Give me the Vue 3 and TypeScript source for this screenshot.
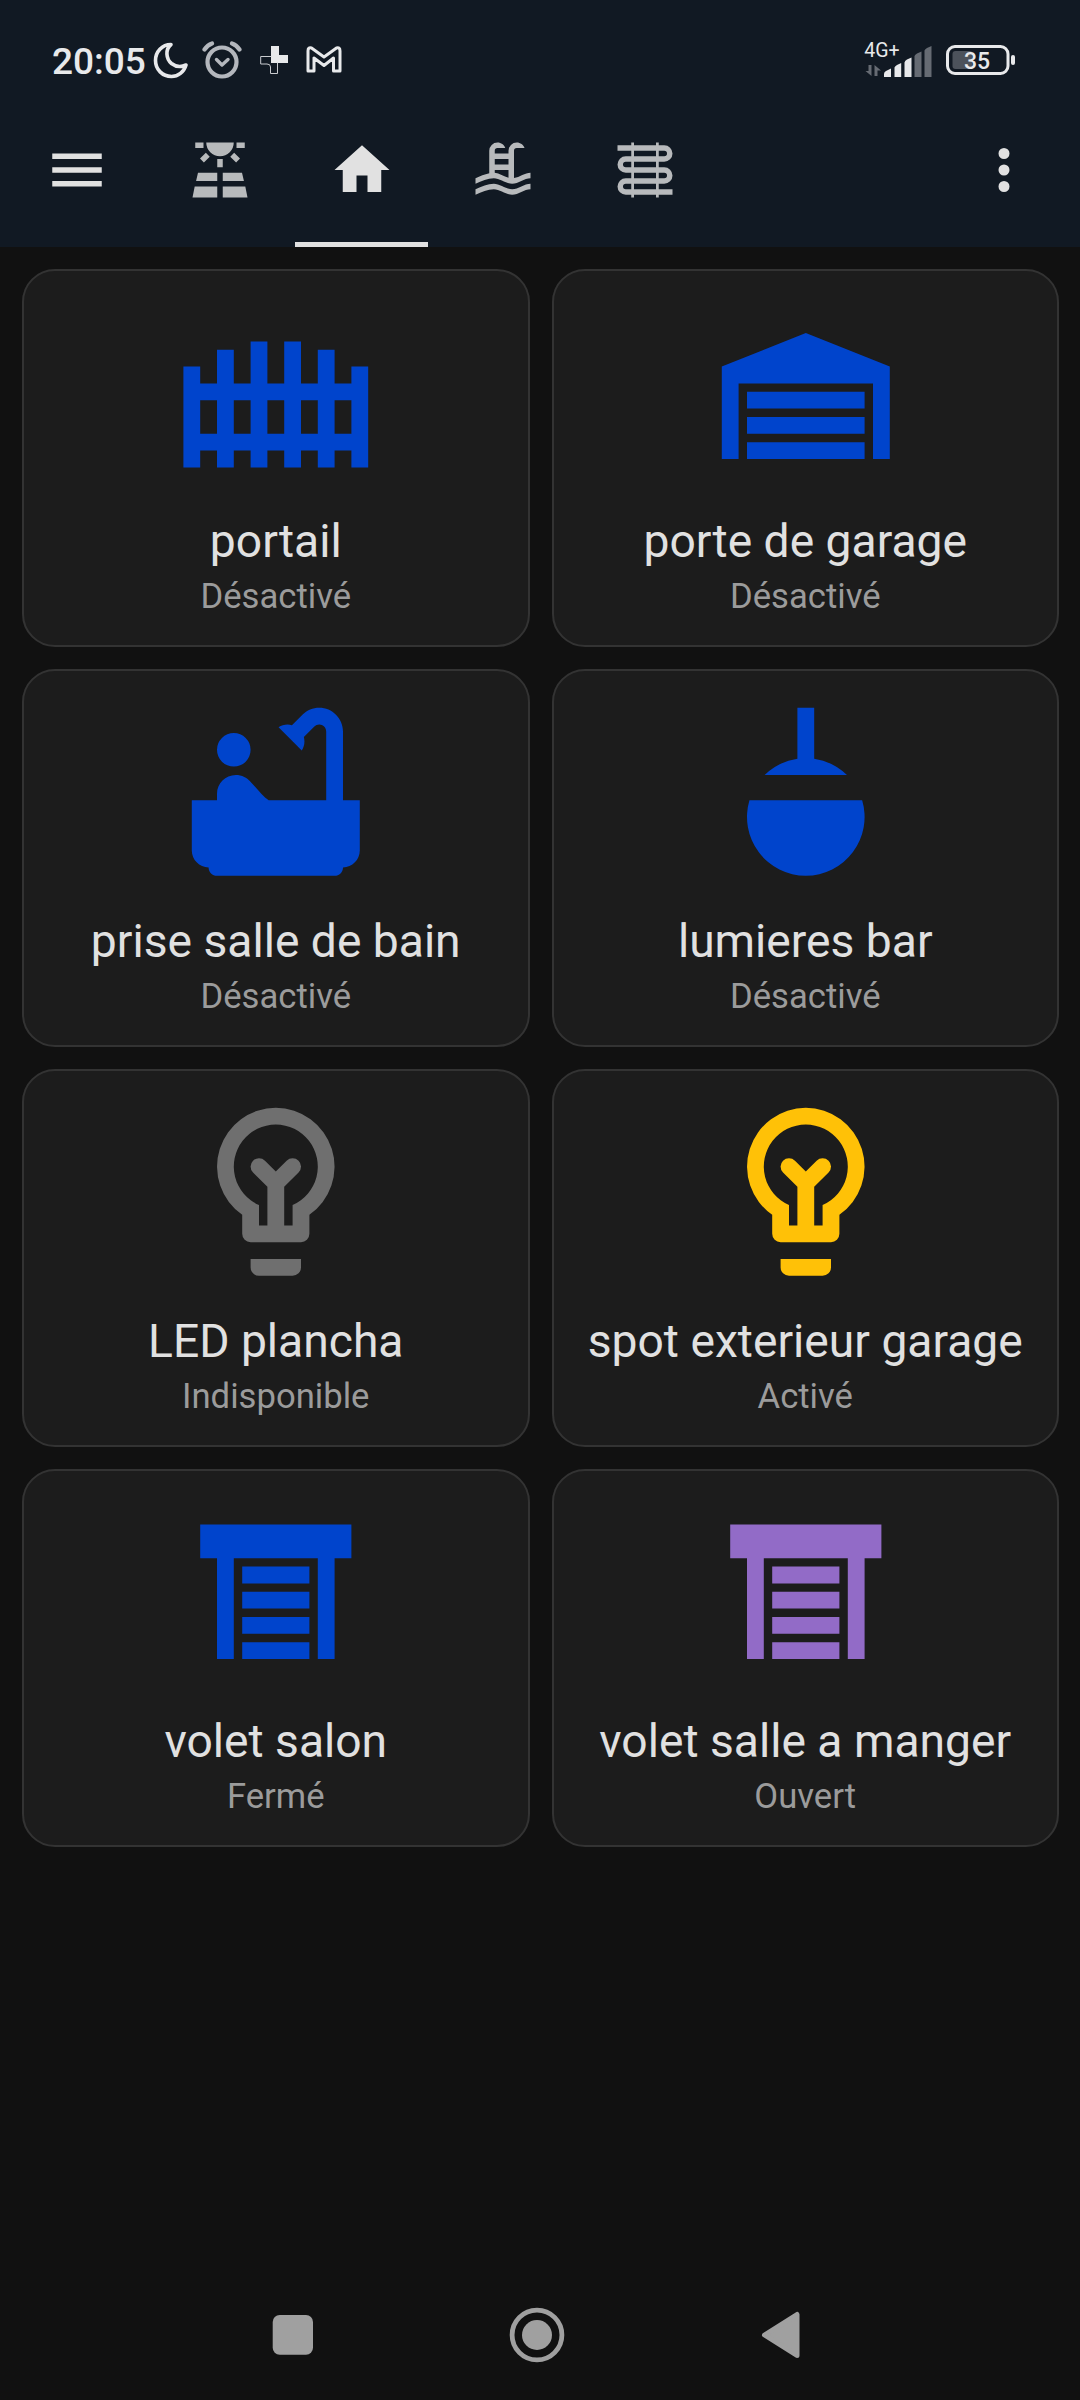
<script setup lang="ts">
interface Tile {
  name: string
  state: string
  icon: keyof typeof glyphs
  color: string
}

interface Tab {
  id: string
  icon: keyof typeof glyphs
  active?: boolean
}

const glyphs = {
  menu: 'M3 6H21V8H3ZM3 11H21V13H3ZM3 16H21V18H3Z',
  dots: 'M12 4A2 2 0 0 1 12 8A2 2 0 0 1 12 4M12 10A2 2 0 0 1 12 14A2 2 0 0 1 12 10M12 16A2 2 0 0 1 12 20A2 2 0 0 1 12 16Z',
  solar:
    'M3 2H6V4H3ZM18 2H21V4H18ZM7 2H17A5 5 0 0 1 7 2ZM11 8H13V11H11ZM6.85 5.74L8.27 7.15L6.14 9.28L4.73 7.86ZM17.15 5.74L15.73 7.15L17.86 9.28L19.27 7.86ZM4 13H11V16H3.3ZM13 13H20L20.7 16H13ZM2.8 18H11V22H2ZM13 18H21.2L22 22H13Z',
  home: 'M10 20V14H14V20H19V12H22L12 3L2 12H5V20H10Z',
  pool: 'M2 15C3.67 14.25 5.33 13.5 7 13.17V5A3 3 0 0 1 10 2C11.31 2 12.42 2.83 12.83 4H10A1 1 0 0 0 9 5V6H14V5A3 3 0 0 1 17 2C18.31 2 19.42 2.83 19.83 4H17A1 1 0 0 0 16 5V14.94C18 14.62 20 13 22 13V15C19.78 15 17.56 17 15.33 17C13.11 17 10.89 15 8.67 15C6.44 15 4.22 16 2 17V15M14 8H9V10H14V8M14 12H9V13C10.67 13.16 12.33 14.31 14 14.79V12M2 19C4.22 18 6.44 17 8.67 17C10.89 17 13.11 19 15.33 19C17.56 19 19.78 17 22 17V19C19.78 19 17.56 21 15.33 21C13.11 21 10.89 19 8.67 19C6.44 19 4.22 20 2 21V19Z',
  coil: 'M7 2H8V22H7ZM16 2H17V22H16ZM2 3H19A3 3 0 0 1 19 9H5A1 1 0 0 0 5 11H19A3 3 0 0 1 19 17H5A1 1 0 0 0 5 19H22V21H5A3 3 0 0 1 5 15H19A1 1 0 0 0 19 13H5A3 3 0 0 1 5 7H19A1 1 0 0 0 19 5H2Z',
  gate: 'M9 6H11V11H13V6H15V11H17V7H19V11H21V9H23V21H21V19H19V21H17V19H15V21H13V19H11V21H9V19H7V21H5V19H3V21H1V9H3V11H5V7H7V11H9ZM3 13V17H5V13ZM7 13V17H9V13ZM11 13V17H13V13ZM15 13V17H17V13ZM19 13V17H21V13Z',
  garage:
    'M22 9V20H20V11H4V20H2V9L12 5L22 9M19 12H5V14H19V12M19 18H5V20H19V18M19 15H5V17H19V15Z',
  bath: 'M7 5A2 2 0 0 1 7 9A2 2 0 0 1 7 5ZM20 13V4.83C20 3.27 18.73 2 17.17 2c-.75 0-1.47.3-2 .83l-1.25 1.25c-.16-.05-.33-.08-.51-.08-.4 0-.77.12-1.08.32l2.76 2.76c.2-.31.32-.68.32-1.08 0-.18-.03-.34-.07-.51l1.25-1.25c.15-.15.36-.24.58-.24.46 0 .83.37.83.83V13h-6.85c-.3-.21-.57-.45-.82-.72l-1.4-1.55c-.19-.21-.43-.38-.69-.5-.31-.15-.65-.23-1-.23C6 10.01 5 11.01 5 12.25V13H2v6c0 1.1.9 2 2 2 0 .55.45 1 1 1h14c.55 0 1-.45 1-1 1.1 0 2-.9 2-2v-6h-2z',
  lamp: 'M11 2H13V8.07A7 7 0 0 1 16.9 10H7.1A7 7 0 0 1 11 8.07ZM5.29 13H18.71A7 7 0 1 1 5.29 13Z',
  bulb: 'M12 2A7 7 0 0 0 8 14.74V17A1 1 0 0 0 9 18H15A1 1 0 0 0 16 17V14.74A7 7 0 0 0 12 2M14 13.58V16H13V11.41L14.71 9.71A1 1 0 0 0 13.29 8.29L12 9.59L10.71 8.29A1 1 0 0 0 9.29 9.71L11 11.41V16H10V13.58A5 5 0 1 1 14 13.58M9 20H15V21A1 1 0 0 1 14 22H10A1 1 0 0 1 9 21Z',
  shutter:
    'M3 4H21V8H19V20H17V8H7V20H5V8H3V4M8 9H16V11H8V9M8 12H16V14H8V12M8 15H16V17H8V15M8 18H16V20H8V18Z',
}

const tabs: Tab[] = [
  { id: 'solaire', icon: 'solar' },
  { id: 'maison', icon: 'home', active: true },
  { id: 'piscine', icon: 'pool' },
  { id: 'chauffage', icon: 'coil' },
]

const blue = '#0044cc'
const tiles: Tile[] = [
  { name: 'portail', state: 'Désactivé', icon: 'gate', color: blue },
  { name: 'porte de garage', state: 'Désactivé', icon: 'garage', color: blue },
  { name: 'prise salle de bain', state: 'Désactivé', icon: 'bath', color: blue },
  { name: 'lumieres bar', state: 'Désactivé', icon: 'lamp', color: blue },
  { name: 'LED plancha', state: 'Indisponible', icon: 'bulb', color: '#6f6f6f' },
  { name: 'spot exterieur garage', state: 'Activé', icon: 'bulb', color: '#ffc107' },
  { name: 'volet salon', state: 'Fermé', icon: 'shutter', color: blue },
  { name: 'volet salle a manger', state: 'Ouvert', icon: 'shutter', color: '#926bc7' },
]
</script>

<template>
  <div class="screen">
    <div class="status">
      <span class="clock">20:05</span>
      <svg class="moon" width="36" height="38" viewBox="0 0 36 38">
        <path d="M18 3.500C12 8.500 13 18 18.500 22.500C23 26 28.500 26 33 24C31 31 25 35.500 18.500 35.500C9.500 35.500 2.500 28.500 2.500 19.500C2.500 11 9 3.500 18 3.500Z" />
      </svg>
      <svg class="alarm" width="40" height="38" viewBox="0 0 40 38">
        <circle cx="20" cy="21" r="14.500" />
        <path d="M2.500 8.500Q5.500 4 10 2.500M37.500 8.500Q34.500 4 30 2.500" />
        <path class="hand" d="M14.500 18.500L20 24L26 18.500" />
      </svg>
      <svg class="cross" width="29" height="30" viewBox="0 0 29 30">
        <path class="full" d="M11 1H19V10H28V18H11Z" />
        <path class="line" d="M11 11.500H0.700V19H7Q10.500 19 10.500 22V28.500H17.500V18" />
      </svg>
      <svg class="mail" width="36" height="30" viewBox="0 0 36 30">
        <path d="M2 26V6Q2 2 5.500 3L18 12L30.500 3Q34 2 34 6V26H27.500V13L18 20.500L8 13V26Z" />
      </svg>
      <div class="spacer"></div>
      <svg class="signal" width="70" height="48" viewBox="0 -8 70 48">
        <text x="0.300" y="16.200">4G+</text>
        <path class="dim" d="M7.500 24V35L1.500 30H4.500V24ZM10.500 35V24L17 29.500H13.500V35Z" />
        <path class="on" d="M20 36V33Q20 31 22 30L27 27.500V36ZM30.500 36V26.500Q31 25 33 24L37.200 22V36ZM40.500 36V21.500Q41 19.500 43 18.500L47.500 16.500V36Z" />
        <path class="dim" d="M50.500 36V15Q51 13.500 53 12.500L57.500 10.500V36ZM60.500 36V9.500Q61 8 63 7L67.500 5V36Z" />
      </svg>
      <svg class="battery" width="70" height="32" viewBox="0 0 70 32">
        <rect class="level" x="6.500" y="7" width="20" height="18" rx="3" />
        <rect class="shell" x="1.500" y="2.500" width="60.500" height="27" rx="7.500" />
        <rect class="nub" x="65" y="11" width="4" height="10" rx="2" />
        <text x="18" y="25">35</text>
      </svg>
    </div>

    <header class="toolbar">
      <div class="action menu">
        <svg class="glyph" viewBox="0 0 24 24"><path :d="glyphs.menu" /></svg>
      </div>
      <nav class="tabs">
        <div v-for="tab in tabs" :key="tab.id" class="tab" :class="{ active: tab.active }">
          <svg class="glyph" viewBox="0 0 24 24"><path :d="glyphs[tab.icon]" /></svg>
        </div>
      </nav>
      <div class="action more">
        <svg class="glyph" viewBox="0 0 24 24"><path :d="glyphs.dots" /></svg>
      </div>
    </header>

    <main class="grid">
      <section v-for="tile in tiles" :key="tile.name" class="card">
        <svg class="picto" viewBox="0 0 24 24" :style="{ fill: tile.color }">
          <path :d="glyphs[tile.icon]" />
        </svg>
        <div class="name">{{ tile.name }}</div>
        <div class="state">{{ tile.state }}</div>
      </section>
    </main>

    <footer class="navbar">
      <svg width="56" height="56" viewBox="0 0 56 56">
        <rect x="7.700" y="8" width="40.300" height="39.700" rx="7" />
      </svg>
      <svg width="56" height="56" viewBox="0 0 56 56">
        <circle class="ring" cx="28" cy="28" r="24.900" />
        <circle cx="28" cy="28" r="15" />
      </svg>
      <svg width="56" height="56" viewBox="0 0 56 56">
        <path class="back" d="M11.500 28L44 7.500V48.500Z" />
      </svg>
    </footer>
  </div>
</template>

<style>
body {
  margin: 0;
  background: #111111;
}
</style>

<style scoped>
.screen {
  display: flex;
  flex-direction: column;
  width: 1080px;
  height: 2400px;
  background: #111111;
  font-family: Roboto, 'Noto Sans', sans-serif;
  overflow: hidden;
}

.status {
  display: flex;
  align-items: flex-start;
  box-sizing: border-box;
  height: 93px;
  padding: 41px 64px 0 52px;
  background: #111923;
}

.status svg {
  flex: none;
  fill: none;
  stroke-linejoin: round;
  stroke-linecap: round;
}

.clock {
  width: 101px;
  color: #e8e9eb;
  font-size: 37px;
  font-weight: 500;
  line-height: 42px;
}

.moon {
  stroke: #e8e9eb;
  stroke-width: 3.6;
}

.alarm {
  margin-left: 13px;
  stroke: #b4b7bd;
  stroke-width: 4.2;
}

.alarm .hand {
  stroke-width: 3.4;
}

.cross {
  margin: 4px 0 0 18px;
}

.cross .full {
  fill: #e8e9eb;
}

.cross .line {
  stroke: #c9cbcf;
  stroke-width: 1;
  stroke-linejoin: miter;
}

.mail {
  margin: 4px 0 0 17px;
  stroke: #e8e9eb;
  stroke-width: 3;
}

.spacer {
  flex: 1;
}

.signal {
  margin: -8px 1px 0 0;
  overflow: visible;
}

.signal text {
  fill: #e8e9eb;
  font-size: 19.500px;
}

.signal .on {
  fill: #e8e9eb;
}

.signal .dim {
  fill: #666b73;
}

.battery {
  margin: 3px 0 0 11px;
}

.battery .level {
  fill: #4c525b;
}

.battery .shell {
  stroke: #e8e9eb;
  stroke-width: 3;
}

.battery .nub {
  fill: #e8e9eb;
}

.battery text {
  fill: #e8e9eb;
  font-size: 23px;
  font-weight: 500;
}

.toolbar {
  display: flex;
  align-items: stretch;
  height: 154px;
  background: #111923;
}

.action {
  display: flex;
  align-items: center;
  justify-content: center;
  width: 66px;
}

.menu {
  margin-left: 44px;
}

.more {
  margin-right: 43px;
}

.glyph {
  display: block;
  width: 66px;
  height: 66px;
  fill: #e1e1e1;
}

.tabs {
  display: flex;
  flex: 1;
  gap: 9.4px;
  margin-left: 43.800px;
}

.tab {
  display: flex;
  align-items: center;
  justify-content: center;
  box-sizing: border-box;
  width: 132.300px;
  border-top: 5px solid transparent;
  border-bottom: 5px solid transparent;
}

.tab .glyph {
  fill: #b8babc;
}

.tab.active {
  border-bottom-color: #e1e1e1;
}

.tab.active .glyph {
  fill: #e1e1e1;
}

.grid {
  display: grid;
  grid-template-columns: 1fr 1fr;
  grid-auto-rows: 378px;
  gap: 22px;
  flex: 1;
  align-content: start;
  padding: 22px 21px 0 22px;
}

.card {
  display: flex;
  flex-direction: column;
  align-items: center;
  box-sizing: border-box;
  padding-top: 20px;
  background: #1c1c1c;
  border: 2px solid #333333;
  border-radius: 33px;
}

.picto {
  display: block;
  flex: none;
  width: 201.600px;
  height: 201.600px;
  margin-left: 1px;
}

.name {
  margin-top: 21.400px;
  color: #e1e1e1;
  font-size: 46.200px;
  line-height: 54px;
  white-space: nowrap;
}

.state {
  margin-top: 8px;
  color: #9b9b9b;
  font-size: 34.650px;
  line-height: 41px;
}

.navbar {
  display: flex;
  justify-content: space-between;
  box-sizing: border-box;
  height: 93px;
  padding: 0 271px 0 264.800px;
}

.navbar svg {
  fill: #a0a0a0;
}

.navbar .ring {
  fill: none;
  stroke: #a0a0a0;
  stroke-width: 4.800;
}

.navbar .back {
  stroke: #a0a0a0;
  stroke-width: 5;
  stroke-linejoin: round;
}
</style>
